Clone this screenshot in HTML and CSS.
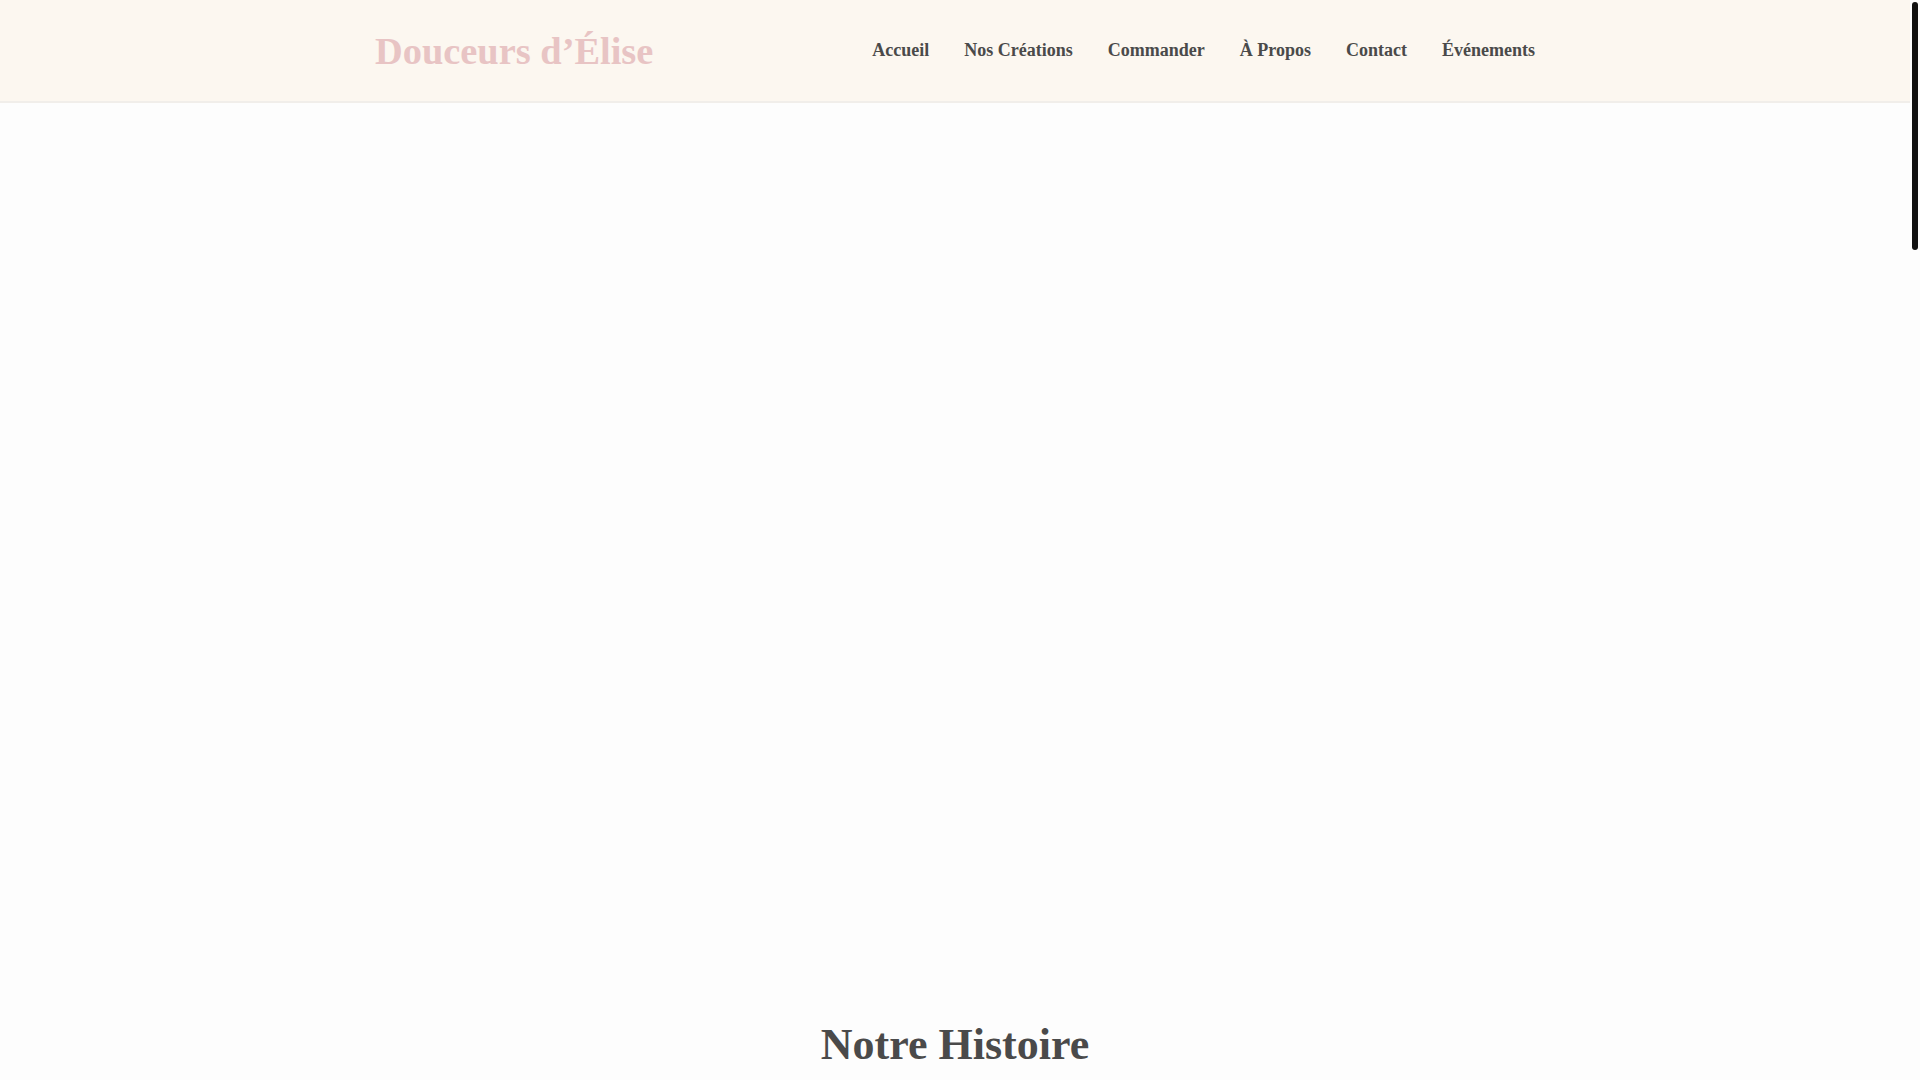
FILE: index.html
```html
<!DOCTYPE html>
<html lang="fr">
<head>
<meta charset="utf-8">
<title>Douceurs d’Élise</title>
<link rel="stylesheet" href="styles.css">
</head>
<body>
<header class="site-header">
  <div class="container header-inner">
    <a class="logo" href="#">Douceurs d’Élise</a>
    <nav class="main-nav">
      <a href="#">Accueil</a>
      <a href="#">Nos Créations</a>
      <a href="#">Commander</a>
      <a href="#">À Propos</a>
      <a href="#">Contact</a>
      <a href="#">Événements</a>
    </nav>
  </div>
</header>
<main>
  <section class="hero"></section>
  <section class="about">
    <div class="container">
      <h2 class="section-title">Notre Histoire</h2>
      <p class="about-text">Depuis notre petit atelier, nous imaginons des pâtisseries artisanales préparées avec amour, des ingrédients de saison et un savoir-faire transmis de génération en génération.</p>
    </div>
  </section>
  <section class="creations">
    <div class="container">
      <h2 class="section-title">Nos Créations</h2>
    </div>
  </section>
  <footer class="site-footer">
    <div class="container">
      <p>© Douceurs d’Élise</p>
    </div>
  </footer>
</main>
<div class="scrollbar" aria-hidden="true"><div class="scrollbar-thumb"></div></div>
</body>
</html>
```
FILE: styles.css
```css
html {
  background: #fdfdfd;
  scrollbar-width: none;
}
html::-webkit-scrollbar {
  display: none;
}
body {
  margin: 0 10px 0 0;
  font-family: "Liberation Serif", "Times New Roman", serif;
  color: #4a4a4a;
  background: #fdfdfd;
}
a {
  text-decoration: none;
  color: inherit;
}
.container {
  max-width: 1200px;
  margin: 0 auto;
  padding: 0 20px;
  box-sizing: border-box;
}
.site-header {
  background: #fcf7f0;
  border-bottom: 2px solid #f1eeea;
}
.header-inner {
  height: 101px;
  display: flex;
  align-items: center;
  justify-content: space-between;
}
.logo {
  font-size: 38.4px;
  font-weight: bold;
  color: #e8c4c4;
}
.main-nav {
  display: flex;
  gap: 35px;
}
.main-nav a {
  font-size: 18px;
  font-weight: bold;
  color: #4a4a4a;
}
.hero {
  height: 864px;
  background: #fdfdfd;
}
.about {
  padding: 52px 0 80px;
}
.section-title {
  margin: 0;
  font-size: 44px;
  line-height: 1.2;
  font-weight: bold;
  text-align: center;
  color: #4a4a4a;
}
.about-text {
  max-width: 800px;
  margin: 40px auto 0;
  font-size: 18px;
  line-height: 1.8;
  text-align: center;
}
.creations {
  padding: 80px 0;
}
.site-footer {
  padding: 40px 0;
  background: #fcf7f0;
  text-align: center;
}
.site-footer p {
  margin: 0;
}
.scrollbar {
  position: fixed;
  top: 0;
  right: 0;
  width: 10px;
  height: 100vh;
  background: #fdfdfd;
  padding: 2px;
  box-sizing: border-box;
}
.scrollbar-thumb {
  height: 248px;
  border-radius: 3px;
  background: #111111;
}
```
